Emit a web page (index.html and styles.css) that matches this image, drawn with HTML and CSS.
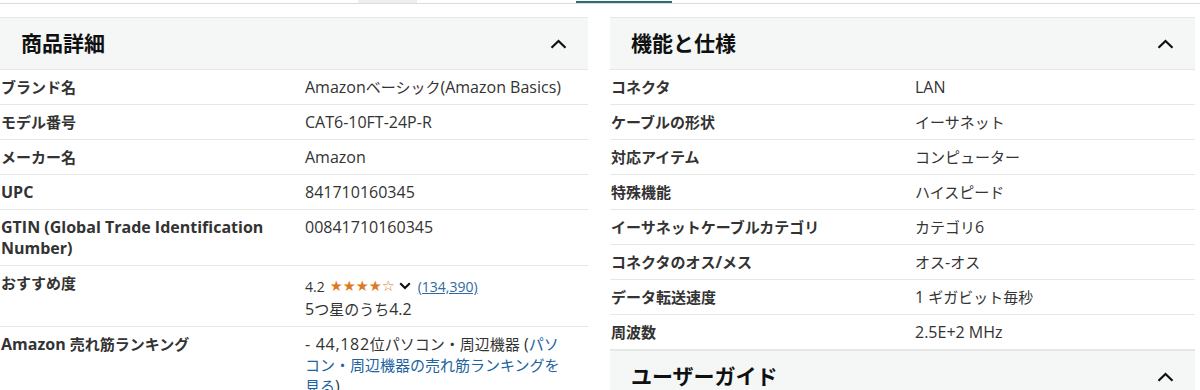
FILE: index.html
```html
<!DOCTYPE html>
<html lang="ja">
<head>
<meta charset="utf-8">
<title>商品詳細</title>
<link rel="stylesheet" href="styles.css">
</head>
<body>
<div class="tabbar">
  <span class="tab tab-hover"></span>
  <span class="tab tab-active"></span>
</div>
<div class="columns">
  <section class="panel panel-left">
    <div class="panel-head">
      <h2>商品詳細</h2>
      <svg class="chev" width="17" height="10" viewBox="0 0 17 10"><path d="M1.5 8.8 L8.5 2 L15.5 8.8" fill="none" stroke="#0f1111" stroke-width="2.2"/></svg>
    </div>
    <table class="spec">
      <tr><th>ブランド名</th><td><span class="en">Amazon</span>ベーシック<span class="en">(Amazon Basics)</span></td></tr>
      <tr><th>モデル番号</th><td><span class="en">CAT6-10FT-24P-R</span></td></tr>
      <tr><th>メーカー名</th><td><span class="en">Amazon</span></td></tr>
      <tr><th><span class="en">UPC</span></th><td><span class="en">841710160345</span></td></tr>
      <tr><th><span class="en">GTIN (Global Trade Identification Number)</span></th><td><span class="en">00841710160345</span></td></tr>
      <tr><th>おすすめ度</th><td>
        <div class="rating">
          <span class="rating-num">4.2</span>
          <span class="stars">★★★★<span class="star-empty">☆</span></span>
          <svg class="caret" width="12" height="8" viewBox="0 0 12 8"><path d="M1.2 1.2 L6 6 L10.8 1.2" fill="none" stroke="#0f1111" stroke-width="2.1"/></svg>
          <a class="count">(134,390)</a>
        </div>
        <div><span class="en">5</span>つ星のうち<span class="en">4.2</span></div>
      </td></tr>
      <tr><th><span class="en">Amazon </span>売れ筋ランキング</th><td class="wrap-narrow"><span class="en rank">- 44,182</span>位パソコン・周辺機器<span class="en"> (</span><a class="link">パソコン・周辺機器の売れ筋ランキングを見る</a><span class="en">)</span></td></tr>
    </table>
  </section>
  <section class="panel panel-right">
    <div class="panel-head">
      <h2>機能と仕様</h2>
      <svg class="chev" width="17" height="10" viewBox="0 0 17 10"><path d="M1.5 8.8 L8.5 2 L15.5 8.8" fill="none" stroke="#0f1111" stroke-width="2.2"/></svg>
    </div>
    <table class="spec">
      <tr><th>コネクタ</th><td><span class="en">LAN</span></td></tr>
      <tr><th>ケーブルの形状</th><td>イーサネット</td></tr>
      <tr><th>対応アイテム</th><td>コンピューター</td></tr>
      <tr><th>特殊機能</th><td>ハイスピード</td></tr>
      <tr><th>イーサネットケーブルカテゴリ</th><td>カテゴリ<span class="en">6</span></td></tr>
      <tr><th>コネクタのオス<span class="en">/</span>メス</th><td>オス<span class="en">-</span>オス</td></tr>
      <tr><th>データ転送速度</th><td><span class="en">1 </span>ギガビット毎秒</td></tr>
      <tr><th>周波数</th><td><span class="en">2.5E+2 MHz</span></td></tr>
    </table>
    <div class="panel-head">
      <h2>ユーザーガイド</h2>
      <svg class="chev" width="17" height="10" viewBox="0 0 17 10"><path d="M1.5 8.8 L8.5 2 L15.5 8.8" fill="none" stroke="#0f1111" stroke-width="2.2"/></svg>
    </div>
  </section>
</div>
</body>
</html>
```

FILE: styles.css
```css
* { box-sizing: border-box; }
html, body { margin: 0; padding: 0; background: #fff; }
body {
  font-family: "Open Sans", "Noto Sans CJK JP", sans-serif;
  font-size: 15px;
  color: #333;
  overflow: hidden;
}
.en { font-size: 16px; line-height: 1; }
.tabbar {
  height: 4px;
  border-bottom: 1px solid #dcdcdc;
  display: flex;
  align-items: flex-end;
}
.tab { display: block; height: 3px; }
.tab-hover { width: 59px; margin-left: 358px; background: #efefef; height: 3px; align-self: flex-start; }
.tab-active { width: 96px; margin-left: 159px; background: #2b6f70; height: 2px; }
.columns {
  display: flex;
  gap: 22px;
  margin-top: 13px;
}
.panel-left { width: 588px; }
.panel-right { width: 585px; }
.panel-head {
  height: 53px;
  background: #f5f6f6;
  border-top: 1px solid #e6e8e8;
  border-bottom: 1px solid #e6e8e8;
  display: flex;
  align-items: center;
  justify-content: space-between;
  padding: 0 21px 0 21px;
}
.panel-head h2 {
  margin: 0;
  font-size: 21px;
  font-weight: 700;
  color: #0f1111;
  line-height: 1;
}
.chev { display: block; margin-top: 1px; }
.spec {
  width: 100%;
  border-collapse: collapse;
  table-layout: fixed;
}
.spec th, .spec td {
  text-align: left;
  vertical-align: top;
  padding: 7px 0 6px;
  line-height: 21px;
  border-bottom: 1px solid #e6e8e8;
}
.spec th {
  width: 305px;
  padding-left: 1px;
  padding-right: 20px;
  font-weight: 700;
  color: #333;
}
.spec td { padding-right: 20px; font-weight: 400; }
.spec td.wrap-narrow { padding-right: 26px; }
.rank { letter-spacing: 0.7px; }
.rating {
  display: flex;
  align-items: center;
  height: 26px;
  font-size: 14px;
}
.rating-num { margin-right: 5px; }
.stars { color: #de7921; font-family: "DejaVu Sans", sans-serif; font-size: 14.5px; line-height: 1; }
.caret { margin: 0 7px 0 4px; }
.count { color: #2f6aa3; text-decoration: underline; }
.link { color: #2162a1; }
```
